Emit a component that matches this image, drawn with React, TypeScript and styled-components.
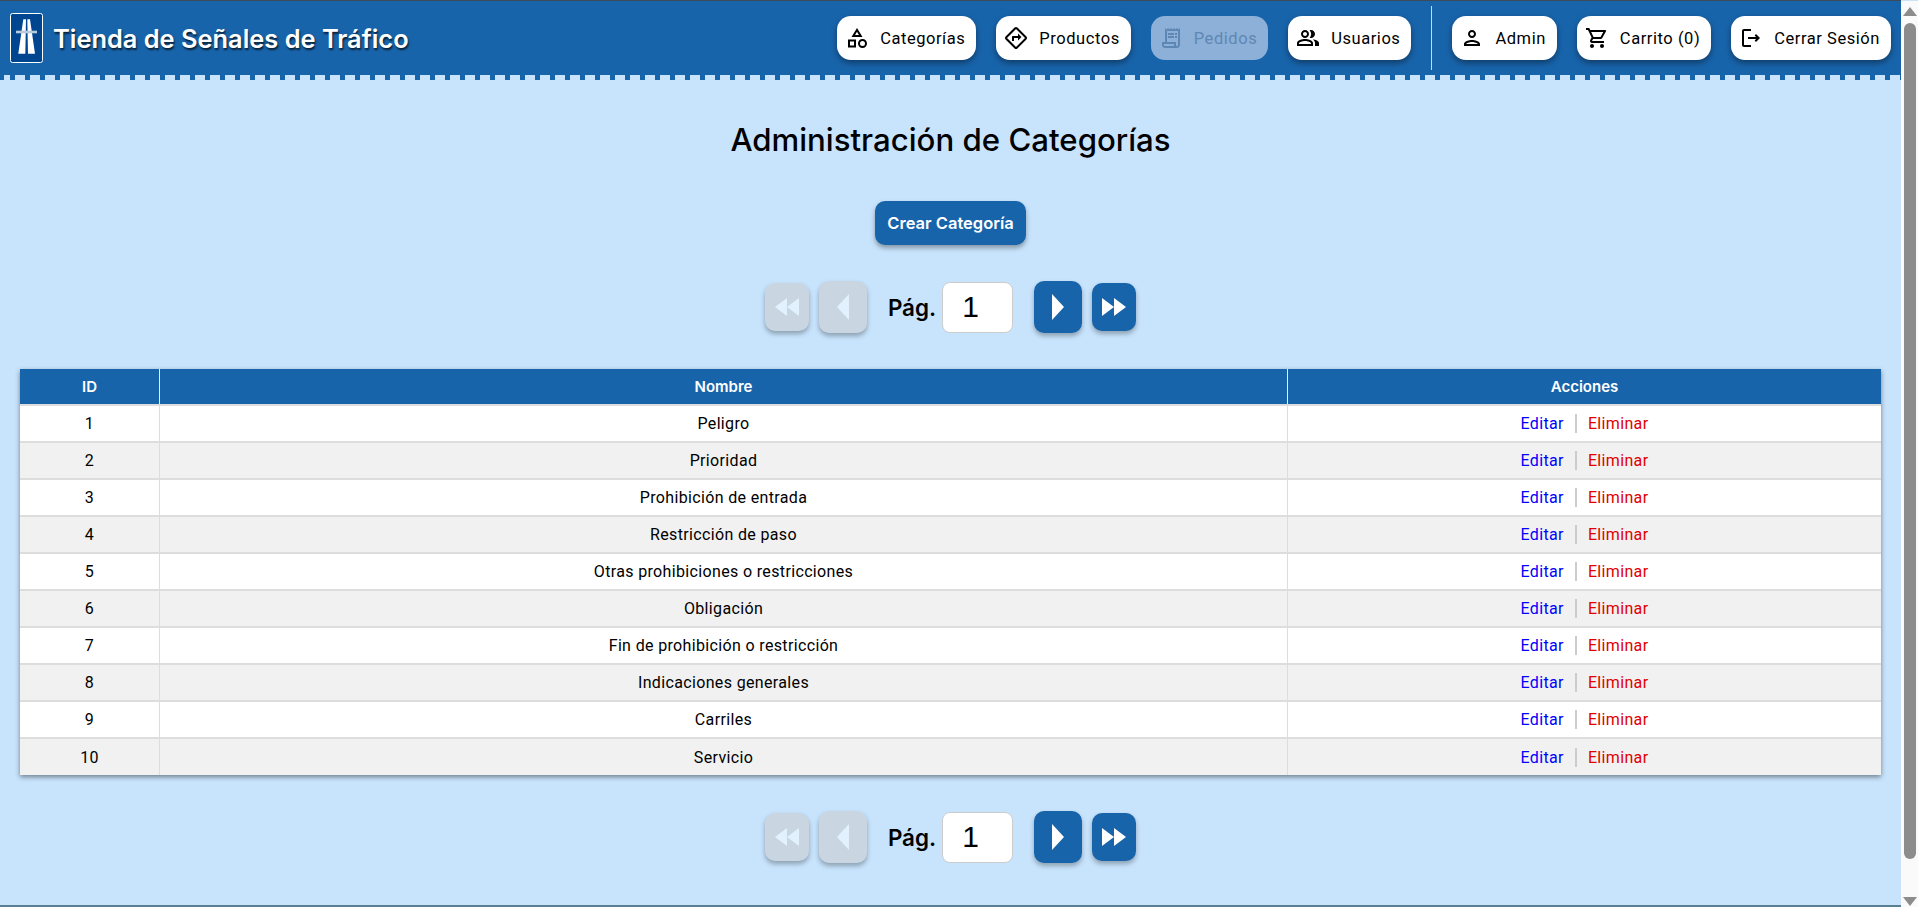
import { createGlobalStyle, styled } from "styled-components";
import {
  MdOutlineCategory,
  MdOutlineDirections,
  MdOutlineReceiptLong,
  MdOutlinePeopleAlt,
  MdOutlinePerson,
  MdOutlineShoppingCart,
  MdOutlineLogout,
} from "react-icons/md";

const GlobalStyle = createGlobalStyle`
  body {
    margin: 0;
    background: #c8e4fd;
    color: #000;
    font-family: Roboto, "Liberation Sans", sans-serif;
  }
`;

const Page = styled.div`
  padding-right: 17px;
`;

const Header = styled.header`
  display: flex;
  align-items: center;
  justify-content: space-between;
  height: 74px;
  padding: 0 10px;
  border-top: 1px solid #3d4a5a;
  background: #1864ab;
`;

const Teeth = styled.div`
  height: 5px;
  background: repeating-linear-gradient(
    90deg,
    #1864ab 0 5px,
    transparent 5px 15px
  );
  background-position: 10px 0;
`;

const Brand = styled.div`
  display: flex;
  align-items: center;
  gap: 10px;
`;

const Title = styled.span`
  font-family: Inter, sans-serif;
  font-size: 25.4px;
  font-weight: 600;
  color: #fff;
  text-shadow: 1px 2px 2px rgba(0, 0, 0, 0.7);
`;

const Nav = styled.nav`
  display: flex;
  align-items: center;
  gap: 20px;
`;

const Divider = styled.div`
  width: 1px;
  height: 64px;
  background: #c8dcf0;
`;

const NavButton = styled.button<{ $off?: boolean }>`
  display: flex;
  align-items: center;
  gap: 11px;
  height: 44px;
  padding: 0 11px 0 8px;
  border: none;
  border-radius: 14px;
  font-family: Roboto, sans-serif;
  font-size: 16.5px;
  letter-spacing: 0.55px;
  background: ${(p) => (p.$off ? "#8cb0d7" : "#fff")};
  color: ${(p) => (p.$off ? "#5f87b3" : "#000")};
  box-shadow: ${(p) => (p.$off ? "none" : "0 3px 6px rgba(0, 0, 0, 0.4)")};
  svg {
    font-size: 24px;
  }
`;

const Main = styled.main`
  display: flex;
  flex-direction: column;
  align-items: center;
  padding: 0 20px;
`;

const Heading = styled.h1`
  margin: 39px 0 0;
  font-family: Inter, sans-serif;
  font-size: 31.2px;
  line-height: 42px;
  font-weight: 500;
`;

const CreateButton = styled.button`
  width: 151px;
  height: 44px;
  margin-top: 40px;
  border: none;
  border-radius: 10px;
  font-family: Inter, sans-serif;
  font-size: 16.5px;
  font-weight: 600;
  color: #fff;
  background: #1864ab;
  box-shadow: 0 3px 5px rgba(0, 0, 0, 0.35);
`;

const Pager = styled.div<{ $top: number }>`
  display: flex;
  align-items: center;
  margin-top: ${(p) => p.$top}px;
`;

const PageButton = styled.button<{ $big?: boolean; $off?: boolean; $gap?: number }>`
  display: flex;
  align-items: center;
  justify-content: center;
  width: ${(p) => (p.$big ? 48 : 44)}px;
  height: ${(p) => (p.$big ? 52 : 48)}px;
  margin-right: ${(p) => p.$gap ?? 0}px;
  padding: 0;
  border: none;
  border-radius: 10px;
  background: ${(p) => (p.$off ? "#c9d6e2" : "#1864ab")};
  box-shadow: 0 3px 5px rgba(0, 0, 0, 0.3);
  svg {
    fill: ${(p) => (p.$off ? "#e2f1fe" : "#fff")};
  }
`;

const PageLabel = styled.span`
  margin-right: 6px;
  font-family: Inter, sans-serif;
  font-size: 22.4px;
  font-weight: 600;
`;

const PageInput = styled.input`
  box-sizing: border-box;
  width: 71px;
  height: 51px;
  margin-right: 21px;
  padding: 0 0 0 19px;
  border: 1px solid #ccc;
  border-radius: 8px;
  font-family: "Liberation Sans", sans-serif;
  font-size: 30px;
  background: #fff;
`;

const TableWrap = styled.div`
  width: 100%;
  margin-top: 36px;
  box-shadow: 0 2px 5px rgba(0, 0, 0, 0.45);
`;

const Table = styled.table`
  width: 100%;
  table-layout: fixed;
  border-collapse: collapse;
  font-size: 16px;
  letter-spacing: 0.35px;
  text-align: center;
`;

const HeadCell = styled.th<{ $w?: number }>`
  width: ${(p) => (p.$w ? `${p.$w}px` : "auto")};
  height: 35px;
  padding: 0;
  border-left: 1px solid #e8eef5;
  font-family: Inter, sans-serif;
  font-size: 15px;
  font-weight: 600;
  letter-spacing: 0;
  color: #fff;
  background: #1864ab;
  &:first-child {
    border-left: none;
  }
`;

const Row = styled.tr`
  background: #fff;
  &:nth-child(even) {
    background: #f1f1f1;
  }
`;

const Cell = styled.td`
  box-sizing: border-box;
  height: 37px;
  padding: 0;
  border-left: 1px solid #ddd;
  border-top: 2px solid #ddd;
  &:first-child {
    border-left: none;
  }
`;

const Actions = styled.div`
  display: flex;
  align-items: center;
  justify-content: center;
`;

const ActionLink = styled.a<{ $danger?: boolean }>`
  color: ${(p) => (p.$danger ? "#e00000" : "#0000ff")};
`;

const ActionBar = styled.span`
  width: 2px;
  height: 19px;
  margin: 0 11px;
  background: #ccc;
`;

const Footer = styled.footer`
  height: 41px;
  margin: 42px -17px 0 0;
  border-top: 2px solid #5a7f95;
  background: #27474f;
`;

/* the browser's own bar doesn't show in the headless window */
const ScrollRail = styled.div`
  position: fixed;
  top: 1px;
  right: 0;
  bottom: 0;
  display: flex;
  flex-direction: column;
  align-items: center;
  width: 17px;
  background: #fafafa;
`;

const ScrollArrow = styled.svg<{ $down?: boolean }>`
  flex: none;
  margin: ${(p) => (p.$down ? "auto 0 1px" : "6px 0 0")};
  fill: #8c8c8c;
`;

const ScrollThumb = styled.div`
  flex: none;
  width: 12px;
  height: 836px;
  margin-top: 7px;
  border-radius: 6px;
  background: #8c8c8c;
`;

const Logo = () => (
  <svg width="33" height="50" viewBox="0 0 33 50">
    <rect x="0.5" y="0.5" width="32" height="49" rx="2" fill="#00458f" stroke="#fff" />
    <polygon points="13.3,6.3 16,6.3 15.3,40.7 8.3,40.7" fill="#fff" />
    <polygon points="17.3,6.3 20,6.3 25,40.7 18,40.7" fill="#fff" />
    <rect x="6" y="17.7" width="21" height="2.6" fill="#b9c9dc" />
  </svg>
);

const Back2 = () => (
  <svg width="24" height="18" viewBox="0 0 24 18">
    <polygon points="12,0 12,18 0,9" />
    <polygon points="24,0 24,18 12,9" />
  </svg>
);
const Back1 = () => (
  <svg width="12" height="26" viewBox="0 0 12 26">
    <polygon points="12,0 12,26 0,13" />
  </svg>
);
const Next1 = () => (
  <svg width="12" height="26" viewBox="0 0 12 26">
    <polygon points="0,0 0,26 12,13" />
  </svg>
);
const Next2 = () => (
  <svg width="24" height="18" viewBox="0 0 24 18">
    <polygon points="0,0 0,18 12,9" />
    <polygon points="12,0 12,18 24,9" />
  </svg>
);

const Pagination = ({ top }: { top: number }) => (
  <Pager $top={top}>
    <PageButton $off $gap={10}>
      <Back2 />
    </PageButton>
    <PageButton $off $big $gap={21}>
      <Back1 />
    </PageButton>
    <PageLabel>Pág.</PageLabel>
    <PageInput type="text" value="1" readOnly />
    <PageButton $big $gap={10}>
      <Next1 />
    </PageButton>
    <PageButton>
      <Next2 />
    </PageButton>
  </Pager>
);

const categories = [
  "Peligro",
  "Prioridad",
  "Prohibición de entrada",
  "Restricción de paso",
  "Otras prohibiciones o restricciones",
  "Obligación",
  "Fin de prohibición o restricción",
  "Indicaciones generales",
  "Carriles",
  "Servicio",
];

export default function App() {
  return (
    <Page>
      <GlobalStyle />
      <Header>
        <Brand>
          <Logo />
          <Title>Tienda de Señales de Tráfico</Title>
        </Brand>
        <Nav>
          <NavButton>
            <MdOutlineCategory />
            Categorías
          </NavButton>
          <NavButton>
            <MdOutlineDirections />
            Productos
          </NavButton>
          <NavButton $off>
            <MdOutlineReceiptLong />
            Pedidos
          </NavButton>
          <NavButton>
            <MdOutlinePeopleAlt />
            Usuarios
          </NavButton>
          <Divider />
          <NavButton>
            <MdOutlinePerson />
            Admin
          </NavButton>
          <NavButton>
            <MdOutlineShoppingCart />
            Carrito (0)
          </NavButton>
          <NavButton>
            <MdOutlineLogout />
            Cerrar Sesión
          </NavButton>
        </Nav>
      </Header>
      <Teeth />
      <Main>
        <Heading>Administración de Categorías</Heading>
        <CreateButton>Crear Categoría</CreateButton>
        <Pagination top={36} />
        <TableWrap>
          <Table>
            <thead>
              <tr>
                <HeadCell $w={139}>ID</HeadCell>
                <HeadCell>Nombre</HeadCell>
                <HeadCell $w={593}>Acciones</HeadCell>
              </tr>
            </thead>
            <tbody>
              {categories.map((name, index) => (
                <Row key={name}>
                  <Cell>{index + 1}</Cell>
                  <Cell>{name}</Cell>
                  <Cell>
                    <Actions>
                      <ActionLink>Editar</ActionLink>
                      <ActionBar />
                      <ActionLink $danger>Eliminar</ActionLink>
                    </Actions>
                  </Cell>
                </Row>
              ))}
            </tbody>
          </Table>
        </TableWrap>
        <Pagination top={36} />
      </Main>
      <Footer />
      <ScrollRail>
        <ScrollArrow width="14" height="9" viewBox="0 0 14 9">
          <polygon points="7,0 14,9 0,9" />
        </ScrollArrow>
        <ScrollThumb />
        <ScrollArrow $down width="14" height="9" viewBox="0 0 14 9">
          <polygon points="0,0 14,0 7,9" />
        </ScrollArrow>
      </ScrollRail>
    </Page>
  );
}
